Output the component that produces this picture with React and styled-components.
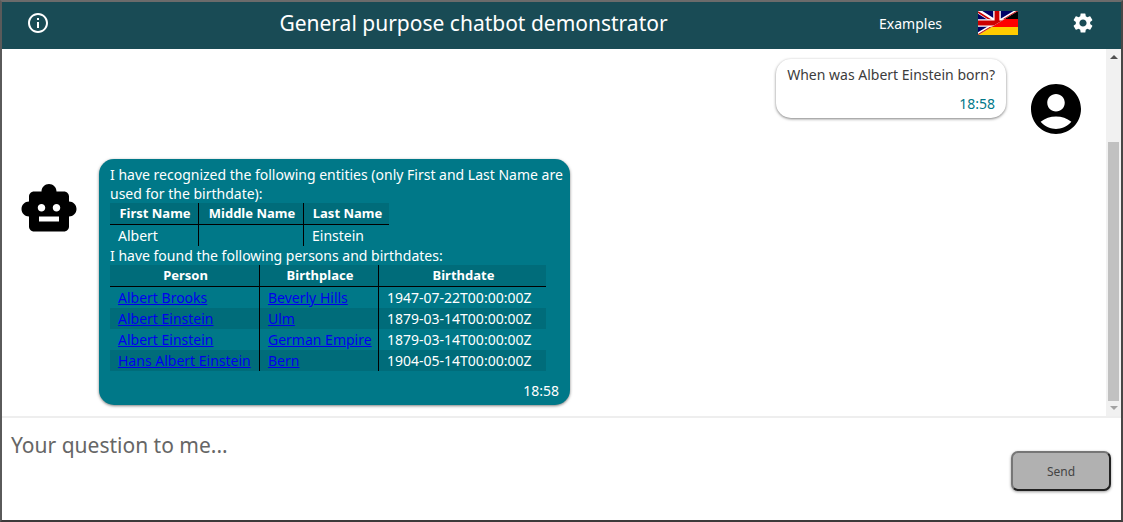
import React from "react";
import styled, { createGlobalStyle } from "styled-components";
import { MdInfoOutline, MdSettings, MdAccountCircle, MdSmartToy } from "react-icons/md";

const GlobalStyle = createGlobalStyle`
  *, *::before, *::after { box-sizing: border-box; }
  body {
    margin: 0;
    background: #fff;
    color: #3c3c3c;
    font: 14px/19px "Noto Sans", "Open Sans", sans-serif;
  }
  button, textarea { font-family: inherit; }
`;

const Frame = styled.div`
  display: flex;
  flex-direction: column;
  height: 100vh;
  border: 2px solid;
  border-color: #6b6b6b #484646 #3c3a3a #5a5a5a;
`;

const Header = styled.header`
  display: flex;
  align-items: center;
  flex: none;
  height: 47px;
  padding: 0 26px 5px 24px;
  background: #194b55;
  color: #fff;
`;

const Title = styled.h1`
  flex: 1;
  margin: 0;
  padding: 0 24px 0 42px;
  font-size: 21px;
  font-weight: 400;
  line-height: 30px;
  text-align: center;
`;

const BarButton = styled.button`
  display: flex;
  padding: 0;
  border: 0;
  background: none;
  color: inherit;
  font-size: 14px;
  line-height: 19px;
  cursor: pointer;
`;

const BarActions = styled.div`
  display: flex;
  align-items: center;
  & > :nth-child(2) { margin: 0 53px 0 36px; }
`;

const ChatArea = styled.div`
  display: flex;
  flex: 1;
  min-height: 0;
`;

const Messages = styled.main`
  display: flex;
  flex-direction: column;
  gap: 20px;
  flex: 1;
  min-width: 0;
  padding: 10px 20px 10px 17px;
  overflow: hidden;
`;

const MessageRow = styled.div`
  display: flex;
  align-items: flex-start;
  gap: 20px;
  flex: none;
  flex-direction: ${(p) => (p.$own ? "row-reverse" : "row")};
`;

const Avatar = styled.div`
  display: flex;
  flex: none;
  padding-top: 20px;
  color: #000;
`;

const Bubble = styled.article`
  max-width: 471px;
  padding: 6px 11px 5px;
  border-radius: 15px;
  background: ${(p) => (p.$own ? "#fff" : "#007888")};
  color: ${(p) => (p.$own ? "#3c3c3c" : "#fff")};
  box-shadow: 0 1px 3px rgba(0, 0, 0, 0.5);
`;

const Text = styled.p`
  margin: 0;
  white-space: nowrap;
`;

const Time = styled.time`
  display: block;
  margin-top: 10px;
  text-align: right;
  color: ${(p) => (p.$own ? "#007888" : "#fff")};
`;

const Table = styled.table`
  border-collapse: separate;
  border-spacing: 0;

  th, td {
    height: 21px;
    padding: 1px 6px 1px 8px;
    white-space: nowrap;
  }
  th {
    height: 22px;
    border-bottom: 1px solid #000;
    font-size: 13px;
    text-align: center;
  }
  th + th, td + td { border-left: 1px solid #000; }
  thead tr, tbody tr:nth-child(even) { background: #006c7a; }
`;

const Link = styled.a`
  color: #0000ee;
  text-decoration: underline;
`;

const ScrollTrack = styled.div`
  display: flex;
  flex-direction: column;
  align-items: center;
  flex: none;
  width: 15px;
  padding: 6px 0;
  background: #f1f1f1;
`;

const ScrollThumb = styled.div`
  width: 11px;
  height: 73%;
  margin: auto 0 5px;
  background: #c1c1c1;
`;

const Arrow = styled.svg`
  display: block;
  width: 8px;
  height: 4px;
  fill: ${(p) => p.$color};
`;

const Composer = styled.form`
  display: flex;
  align-items: center;
  flex: none;
  height: 104px;
  padding: 0 10px 0 0;
  border-top: 2px solid #eee;
`;

const Question = styled.textarea`
  flex: 1;
  align-self: stretch;
  min-width: 0;
  padding: 12px 9px;
  border: 0;
  outline: 0;
  resize: none;
  background: none;
  color: #3c3c3c;
  font-size: 21px;
  line-height: 30px;
  &::placeholder { color: #666; opacity: 1; }
`;

const SendButton = styled.button`
  width: 100px;
  height: 40px;
  margin-top: 4px;
  border: 2px solid;
  border-color: #767676 #212121 #212121 #767676;
  border-radius: 7px;
  background: #b1b1b1;
  color: #444;
  font-size: 12px;
  box-shadow: 0 1px 3px rgba(0, 0, 0, 0.4);
`;

const Flag = () => (
  <svg width="40" height="24" viewBox="0 0 40 24" aria-hidden="true">
    <defs>
      <clipPath id="uk"><path d="M0 0H40L0 24Z" /></clipPath>
    </defs>
    <path d="M0 0h40v8H0z" fill="#000" />
    <path d="M0 8h40v8H0z" fill="#f00" />
    <path d="M0 16h40v8H0z" fill="#fc0" />
    <g clipPath="url(#uk)">
      <path d="M0 0h40v24H0z" fill="#006" />
      <path d="M0 0L38 24M40 0L0 24" stroke="#fff" strokeWidth="4.6" />
      <path d="M0 1L19 13M40 0L0 24" stroke="#c00" strokeWidth="1.6" />
      <path d="M19 0V24M0 12H40" stroke="#fff" strokeWidth="7.6" />
      <path d="M19 0V24M0 12H40" stroke="#c00" strokeWidth="4.8" />
    </g>
  </svg>
);

const births = [
  ["Albert Brooks", "Beverly Hills", "1947-07-22T00:00:00Z"],
  ["Albert Einstein", "Ulm", "1879-03-14T00:00:00Z"],
  ["Albert Einstein", "German Empire", "1879-03-14T00:00:00Z"],
  ["Hans Albert Einstein", "Bern", "1904-05-14T00:00:00Z"],
];

function DataTable({ widths, heads, rows }) {
  return (
    <Table>
      <colgroup>{widths.map((w, i) => <col key={i} width={w} />)}</colgroup>
      <thead>
        <tr>{heads.map((h) => <th key={h} scope="col">{h}</th>)}</tr>
      </thead>
      <tbody>
        {rows.map((row, i) => (
          <tr key={i}>{row.map((cell, j) => <td key={j}>{cell}</td>)}</tr>
        ))}
      </tbody>
    </Table>
  );
}

export default function App() {
  return (
    <>
      <GlobalStyle />
      <Frame>
        <Header>
          <BarButton type="button" aria-label="Information"><MdInfoOutline size={24} /></BarButton>
          <Title>General purpose chatbot demonstrator</Title>
          <BarActions>
            <BarButton type="button">Examples</BarButton>
            <BarButton type="button" aria-label="Language"><Flag /></BarButton>
            <BarButton type="button" aria-label="Settings"><MdSettings size={24} /></BarButton>
          </BarActions>
        </Header>
        <ChatArea>
          <Messages>
            <MessageRow $own>
              <Avatar><MdAccountCircle size={60} /></Avatar>
              <Bubble $own>
                <Text>When was Albert Einstein born?</Text>
                <Time $own>18:58</Time>
              </Bubble>
            </MessageRow>
            <MessageRow>
              <Avatar><MdSmartToy size={60} /></Avatar>
              <Bubble>
                <Text>
                  I have recognized the following entities (only First and Last Name are
                  <br />
                  used for the birthdate):
                </Text>
                <DataTable
                  widths={[88, 105, 86]}
                  heads={["First Name", "Middle Name", "Last Name"]}
                  rows={[["Albert", "", "Einstein"]]}
                />
                <Text>I have found the following persons and birthdates:</Text>
                <DataTable
                  widths={[149, 119, 168]}
                  heads={["Person", "Birthplace", "Birthdate"]}
                  rows={births.map(([person, place, date]) => [
                    <Link href="#person">{person}</Link>,
                    <Link href="#place">{place}</Link>,
                    date,
                  ])}
                />
                <Time>18:58</Time>
              </Bubble>
            </MessageRow>
          </Messages>
          <ScrollTrack aria-hidden="true">
            <Arrow $color="#505050" viewBox="0 0 8 4"><path d="M4 0L8 4H0Z" /></Arrow>
            <ScrollThumb />
            <Arrow $color="#a3a3a3" viewBox="0 0 8 4"><path d="M0 0H8L4 4Z" /></Arrow>
          </ScrollTrack>
        </ChatArea>
        <Composer onSubmit={(e) => e.preventDefault()}>
          <Question aria-label="Your question" placeholder="Your question to me..." />
          <SendButton type="submit">Send</SendButton>
        </Composer>
      </Frame>
    </>
  );
}
